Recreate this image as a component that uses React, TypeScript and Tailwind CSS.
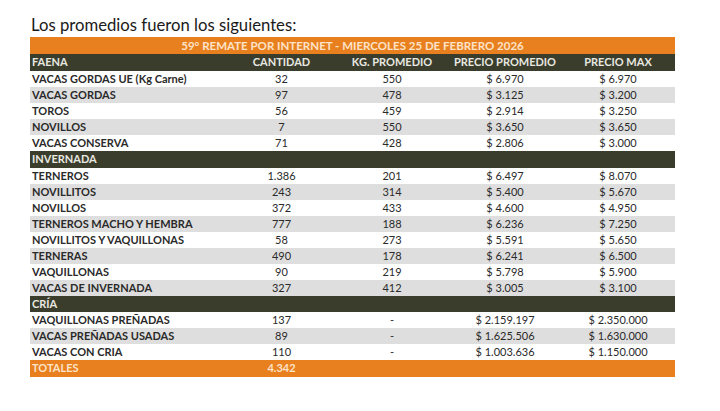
import React from "react";

type Row = { kind: "data" | "section"; name: string; c?: string; kg?: string; pp?: string; pm?: string };

const rows: Row[] = [
  { kind: "data", name: "VACAS GORDAS UE (Kg Carne)", c: "32", kg: "550", pp: "$ 6.970", pm: "$ 6.970" },
  { kind: "data", name: "VACAS GORDAS", c: "97", kg: "478", pp: "$ 3.125", pm: "$ 3.200" },
  { kind: "data", name: "TOROS", c: "56", kg: "459", pp: "$ 2.914", pm: "$ 3.250" },
  { kind: "data", name: "NOVILLOS", c: "7", kg: "550", pp: "$ 3.650", pm: "$ 3.650" },
  { kind: "data", name: "VACAS CONSERVA", c: "71", kg: "428", pp: "$ 2.806", pm: "$ 3.000" },
  { kind: "section", name: "INVERNADA" },
  { kind: "data", name: "TERNEROS", c: "1.386", kg: "201", pp: "$ 6.497", pm: "$ 8.070" },
  { kind: "data", name: "NOVILLITOS", c: "243", kg: "314", pp: "$ 5.400", pm: "$ 5.670" },
  { kind: "data", name: "NOVILLOS", c: "372", kg: "433", pp: "$ 4.600", pm: "$ 4.950" },
  { kind: "data", name: "TERNEROS MACHO Y HEMBRA", c: "777", kg: "188", pp: "$ 6.236", pm: "$ 7.250" },
  { kind: "data", name: "NOVILLITOS Y VAQUILLONAS", c: "58", kg: "273", pp: "$ 5.591", pm: "$ 5.650" },
  { kind: "data", name: "TERNERAS", c: "490", kg: "178", pp: "$ 6.241", pm: "$ 6.500" },
  { kind: "data", name: "VAQUILLONAS", c: "90", kg: "219", pp: "$ 5.798", pm: "$ 5.900" },
  { kind: "data", name: "VACAS DE INVERNADA", c: "327", kg: "412", pp: "$ 3.005", pm: "$ 3.100" },
  { kind: "section", name: "CRÍA" },
  { kind: "data", name: "VAQUILLONAS PREÑADAS", c: "137", kg: "-", pp: "$ 2.159.197", pm: "$ 2.350.000" },
  { kind: "data", name: "VACAS PREÑADAS USADAS", c: "89", kg: "-", pp: "$ 1.625.506", pm: "$ 1.630.000" },
  { kind: "data", name: "VACAS CON CRIA", c: "110", kg: "-", pp: "$ 1.003.636", pm: "$ 1.150.000" },
];

const grid = "grid grid-cols-[198px_107px_114px_112px_114px]";
const cell = "flex items-center justify-center whitespace-nowrap";

export default function App() {
  let stripe = 0;
  return (
    <div className="w-[720px] h-[411px] bg-white pt-[13px]" style={{ fontFamily: "Lato, 'Open Sans', sans-serif" }}>
      <div className="ml-[31px] text-[16.7px] leading-[24px] text-[#1a1a1a]">Los promedios fueron los siguientes:</div>
      <div className="ml-[30px] w-[645px] text-[11px] font-bold text-[#2a2a2a]">
        <div className="h-[17px] bg-[#e8801f] text-[#fde3c8] flex items-center justify-center text-[11.5px]">
          59° REMATE POR INTERNET - MIERCOLES 25 DE FEBRERO 2026
        </div>
        <div className={`${grid} h-[17px] bg-[#3a3d2c] text-[#e8e8e0]`}>
          <div className="flex items-center pl-[2px]">FAENA</div>
          <div className={cell}>CANTIDAD</div>
          <div className={cell}>KG. PROMEDIO</div>
          <div className={cell}>PRECIO PROMEDIO</div>
          <div className={cell}>PRECIO MAX</div>
        </div>
        {rows.map((r, i) => {
          if (r.kind === "section") {
            stripe = 0;
            return (
              <div key={i} className="h-[16.5px] bg-[#3a3d2c] text-[#e8e8e0] flex items-center pl-[2px]">
                {r.name}
              </div>
            );
          }
          const bg = stripe++ % 2 === 1 ? "bg-[#dedede]" : "bg-white";
          return (
            <div key={i} className={`${grid} h-[16px] ${bg}`}>
              <div className="flex items-center pl-[2px] whitespace-nowrap">{r.name}</div>
              <div className={`${cell} font-normal`}>{r.c}</div>
              <div className={`${cell} font-normal`}>{r.kg}</div>
              <div className={`${cell} font-normal`}>{r.pp}</div>
              <div className={`${cell} font-normal`}>{r.pm}</div>
            </div>
          );
        })}
        <div className={`${grid} h-[16.5px] bg-[#e8801f] text-[#fde3c8]`}>
          <div className="flex items-center pl-[2px]">TOTALES</div>
          <div className={cell}>4.342</div>
          <div />
          <div />
          <div />
        </div>
      </div>
    </div>
  );
}
